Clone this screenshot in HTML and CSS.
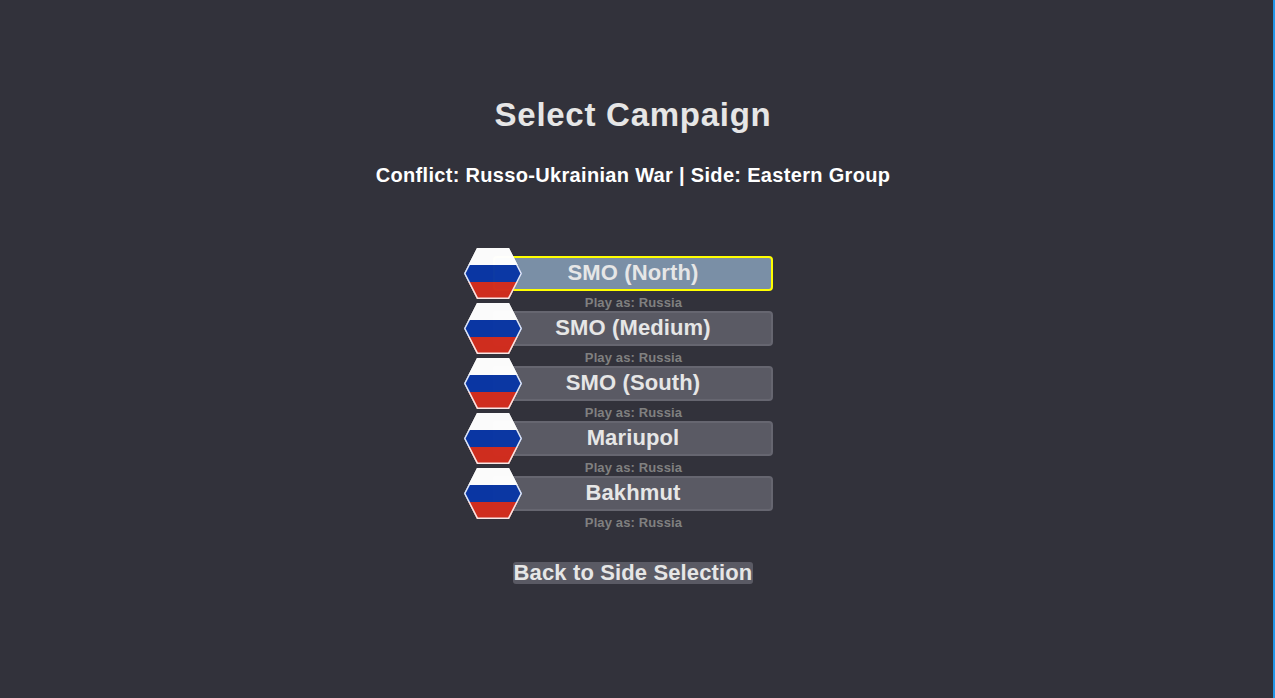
FILE: index.html
```html
<!DOCTYPE html>
<html lang="en">
<head>
<meta charset="utf-8">
<title>Select Campaign</title>
<link rel="stylesheet" href="styles.css">
</head>
<body>
<svg class="defs" aria-hidden="true">
  <symbol id="ru-flag" viewBox="0 0 58 51">
    <polygon points="0,25.5 13,0 45,0 58,25.5 45,51 13,51" fill="#fff"/>
    <polygon points="4.33,17 53.67,17 58,25.5 53.67,34 4.33,34 0,25.5" fill="#0a37a5"/>
    <polygon points="4.33,34 53.67,34 45,51 13,51" fill="#d22d1e"/>
    <polygon points="13.4,50.2 0.8,25.5 13.4,0.8 44.6,0.8 57.2,25.5 44.6,50.2" fill="none" stroke="#fff" stroke-opacity="0.9" stroke-width="1.5"/>
  </symbol>
</svg>
<main class="screen">
  <h1 class="title">Select Campaign</h1>
  <p class="subtitle">Conflict: Russo-Ukrainian War | Side: Eastern Group</p>
  <ul class="list">
    <li class="entry"><div class="row"><button class="btn is-focus">SMO (North)</button><svg class="flag"><use href="#ru-flag"/></svg></div><p class="side">Play as: Russia</p></li>
    <li class="entry"><div class="row"><button class="btn">SMO (Medium)</button><svg class="flag"><use href="#ru-flag"/></svg></div><p class="side">Play as: Russia</p></li>
    <li class="entry"><div class="row"><button class="btn">SMO (South)</button><svg class="flag"><use href="#ru-flag"/></svg></div><p class="side">Play as: Russia</p></li>
    <li class="entry"><div class="row"><button class="btn">Mariupol</button><svg class="flag"><use href="#ru-flag"/></svg></div><p class="side">Play as: Russia</p></li>
    <li class="entry"><div class="row"><button class="btn">Bakhmut</button><svg class="flag"><use href="#ru-flag"/></svg></div><p class="side">Play as: Russia</p></li>
  </ul>
  <button class="back">Back to Side Selection</button>
</main>
</body>
</html>
```
FILE: styles.css
```css
html, body { margin: 0; height: 100%; }
body { background: #32323b; overflow: hidden; font-family: "Liberation Sans", Arial, sans-serif; font-weight: 700; }
.defs { position: absolute; width: 0; height: 0; }
.screen { height: 698px; box-sizing: border-box; padding: 96px 7px 0 0; display: flex; flex-direction: column; align-items: center; border-right: 2px solid #2196e8; }
.title { margin: 0; font-size: 33px; line-height: 38px; letter-spacing: 0.73px; color: #e6e6e6; }
.subtitle { margin: 29px 0 0; font-size: 20px; line-height: 24px; letter-spacing: 0.32px; color: #fff; }
.list { list-style: none; margin: 61px 0 0; padding: 0; width: 280px; display: flex; flex-direction: column; }
.entry { height: 55px; display: flex; flex-direction: column; }
.row { position: relative; flex: none; height: 51px; display: flex; align-items: center; }
.flag { position: absolute; left: -29px; top: 0; width: 58px; height: 51px; opacity: 0.985; }
.btn { font: inherit; font-size: 22px; letter-spacing: 0.13px; color: #e6e6e6; background: #5a5a64; border: 2px solid #666670; border-radius: 4px; width: 100%; height: 35px; padding: 0 0 2px; }
.is-focus { background: #7a8fa6; border-color: #ffff00; }
.side { flex: none; margin: -4px 0 0; padding-left: 1px; font-size: 13px; line-height: 15px; letter-spacing: 0.13px; text-align: center; color: #808080; }
.back { font: inherit; font-size: 22px; letter-spacing: 0.13px; line-height: 22px; height: 22px; width: 240px; white-space: nowrap; color: #e6e6e6; background: #5a5a64; border: 0; border-radius: 3px; padding: 0; margin-top: 39px; }
```
